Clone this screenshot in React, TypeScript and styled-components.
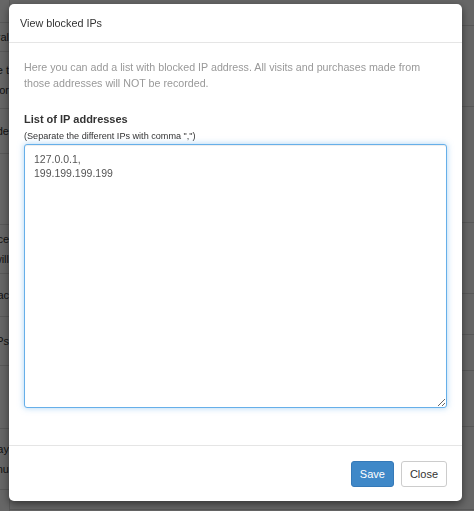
import styled, { createGlobalStyle } from "styled-components";

const GlobalStyle = createGlobalStyle`
  html, body {
    margin: 0;
    padding: 0;
    width: 100%;
    height: 100%;
    overflow: hidden;
    background: #fff;
    font-family: "Liberation Sans", Arial, Helvetica, sans-serif;
  }
`;

// page behind the dialog (settings list, mostly hidden)
const Page = styled.div`
  height: 100vh;
  display: grid;
  grid-template-columns: 40px 1fr;
  margin-left: -30px;
`;

const SideList = styled.div`
  display: flex;
  flex-direction: column;
  border-right: 1px solid #ddd;
`;

const SideRow = styled.div<{ h: number }>`
  height: ${({ h }) => h}px;
  border-bottom: 1px solid #ddd;
  font-size: 11px;
  color: #333;
  display: flex;
  flex-direction: column;
  justify-content: center;
  align-items: flex-end;
  line-height: 20px;
  white-space: nowrap;
`;

const MainList = styled.div`
  display: flex;
  flex-direction: column;
`;

const MainRow = styled.div<{ h: number }>`
  height: ${({ h }) => h}px;
  border-bottom: 1px solid #ddd;
  font-size: 12px;
  color: #333;
  display: flex;
  align-items: flex-end;
  padding-left: 260px;
`;

const Backdrop = styled.div`
  position: fixed;
  inset: 0;
  background: rgba(0, 0, 0, 0.6);
  padding: 4px 12px 0 9px;
`;

const Dialog = styled.div`
  width: 453px;
  height: 497px;
  background: #fff;
  border-radius: 5px;
  box-shadow: 0 3px 9px rgba(0, 0, 0, 0.5);
  display: flex;
  flex-direction: column;
  box-sizing: border-box;
`;

const Header = styled.div`
  height: 38px;
  border-bottom: 1px solid #e5e5e5;
  padding: 0 11px;
  display: flex;
  align-items: center;
  font-size: 10.8px;
  color: #333;
`;

const Body = styled.div`
  flex: 1;
  padding: 16px 15px 37px;
  display: flex;
  flex-direction: column;
`;

const Intro = styled.p`
  margin: 0 0 21px;
  font-size: 10.7px;
  line-height: 16px;
  color: #999;
`;

const Label = styled.div`
  font-size: 11px;
  font-weight: bold;
  color: #333;
  line-height: 14px;
`;

const Hint = styled.div`
  font-size: 9.1px;
  color: #333;
  margin-top: 5px;
  line-height: 10px;
`;

const IpInput = styled.textarea`
  flex: 1;
  margin-top: 3px;
  border: 1px solid #66afe9;
  border-radius: 3px;
  box-shadow: inset 0 1px 1px rgba(0, 0, 0, 0.075), 0 0 6px rgba(102, 175, 233, 0.55);
  padding: 7px 9px;
  font-family: "Liberation Sans", Arial, sans-serif;
  font-size: 10.5px;
  line-height: 14px;
  color: #555;
  outline: none;
  resize: vertical;
`;

const Footer = styled.div`
  height: 55px;
  border-top: 1px solid #e5e5e5;
  display: flex;
  justify-content: flex-end;
  align-items: center;
  gap: 7px;
  padding-right: 15px;
`;

const Button = styled.button<{ primary?: boolean }>`
  height: 26px;
  padding: 0 8px;
  border-radius: 3px;
  font-family: "Liberation Sans", Arial, sans-serif;
  font-size: 11px;
  cursor: pointer;
  border: 1px solid ${({ primary }) => (primary ? "#3579b8" : "#ccc")};
  background: ${({ primary }) => (primary ? "#3f88c8" : "#fff")};
  color: ${({ primary }) => (primary ? "#fff" : "#333")};
`;

const sideRows: [number, string[]][] = [
  [22, [""]],
  [28, ["General"]],
  [56, ["Time t", "Perfor"]],
  [44, ["Upgrade"]],
  [70, [""]],
  [48, ["Advance", "Email will"]],
  [42, ["Feedbac"]],
  [48, ["Block IPs"]],
  [62, [""]],
  [60, ["Display", "Menu"]],
];

const mainRows = [25, 80, 115, 70, 40, 35, 55, 82];

export default function App() {
  return (
    <>
      <GlobalStyle />
      <Page>
        <SideList>
          {sideRows.map(([h, lines], i) => (
            <SideRow key={i} h={h}>
              {lines.map((l, j) => (
                <span key={j}>{l}</span>
              ))}
            </SideRow>
          ))}
        </SideList>
        <MainList>
          {mainRows.map((h, i) => (
            <MainRow key={i} h={h} />
          ))}
          <MainRow h={18}>Change in all features</MainRow>
        </MainList>
      </Page>
      <Backdrop>
        <Dialog>
          <Header>View blocked IPs</Header>
          <Body>
            <Intro>
              Here you can add a list with blocked IP address. All visits and purchases made from
              those addresses will NOT be recorded.
            </Intro>
            <Label>List of IP addresses</Label>
            <Hint>(Separate the different IPs with comma ",")</Hint>
            <IpInput defaultValue={"127.0.0.1,\n199.199.199.199"} autoFocus />
          </Body>
          <Footer>
            <Button primary>Save</Button>
            <Button>Close</Button>
          </Footer>
        </Dialog>
      </Backdrop>
    </>
  );
}
